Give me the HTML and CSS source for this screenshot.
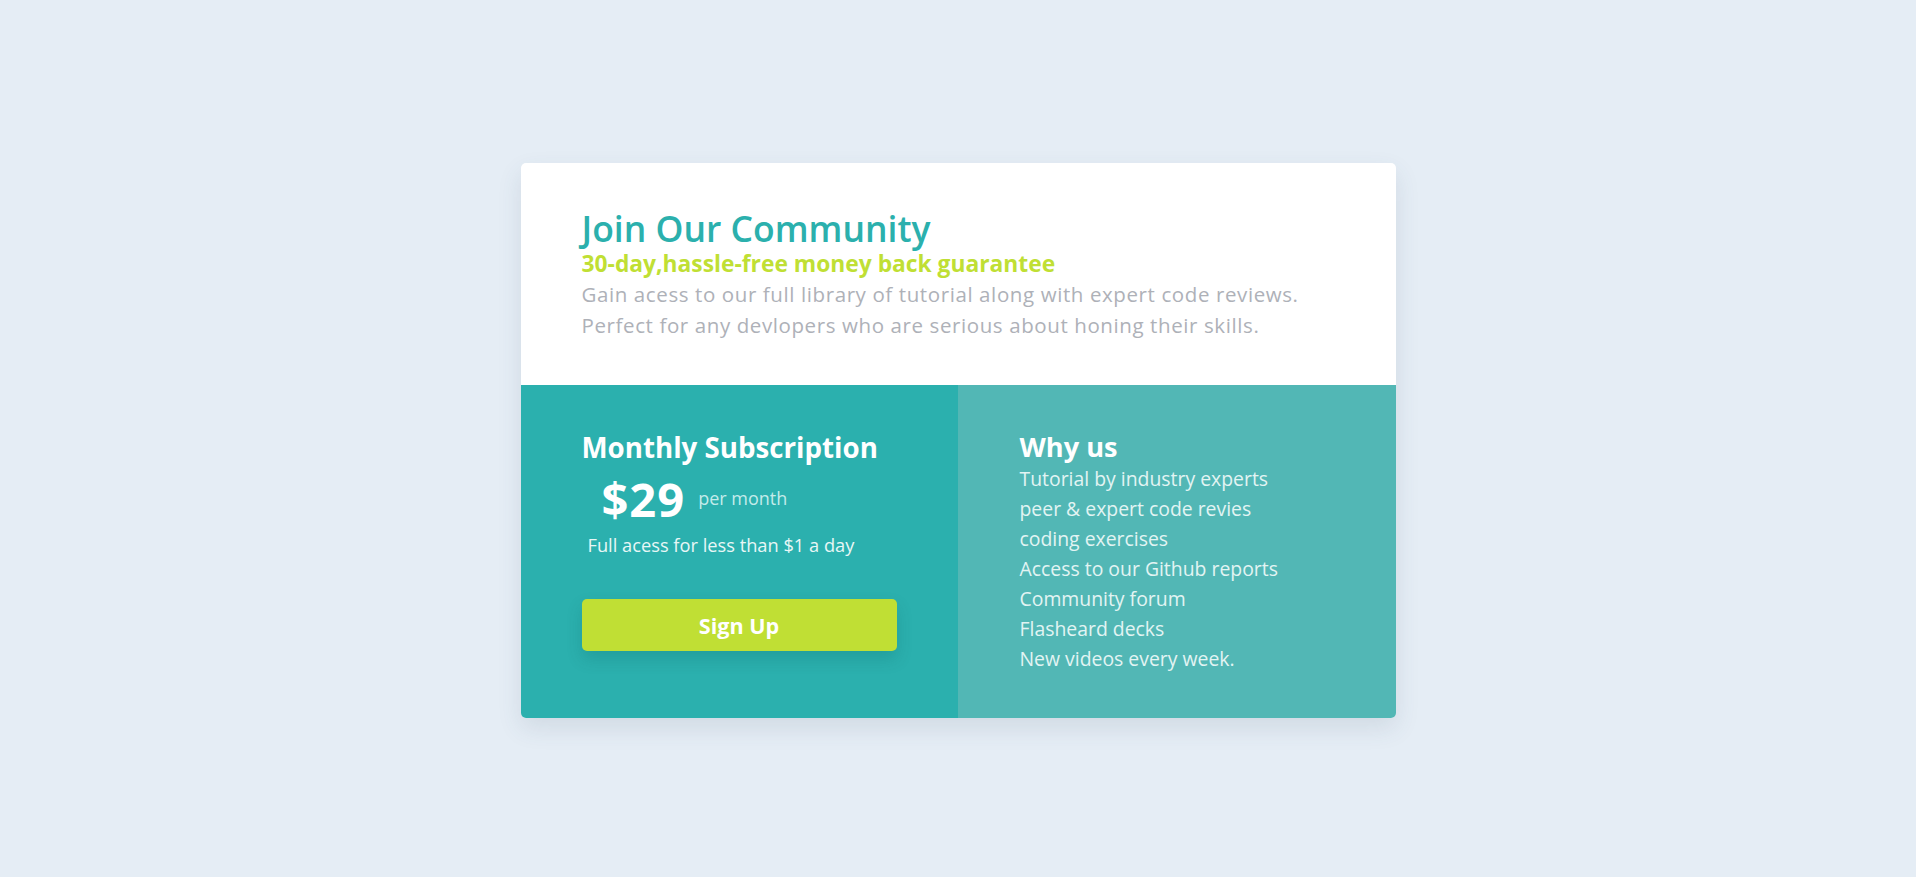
FILE: index.html
```
<!DOCTYPE html>
<html lang="en">
<head>
<meta charset="utf-8">
<title>Join Our Community</title>
<link rel="stylesheet" href="styles.css">
</head>
<body>
<main class="card">
  <section class="intro">
    <h1 class="title">Join Our Community</h1>
    <h2 class="guarantee">30-day,hassle-free money back guarantee</h2>
    <p class="desc">Gain acess to our full library of tutorial along with expert code reviews.<br>Perfect for any devlopers who are serious about honing their skills.</p>
  </section>
  <section class="bottom">
    <div class="sub">
      <h3 class="sub-title">Monthly Subscription</h3>
      <div class="price"><span class="amount">$29</span><span class="per">per month</span></div>
      <p class="full">Full acess for less than $1 a day</p>
      <button class="signup">Sign Up</button>
    </div>
    <div class="why">
      <h3 class="why-title">Why us</h3>
      <ul class="why-list">
        <li>Tutorial by industry experts</li>
        <li>peer &amp; expert code revies</li>
        <li>coding exercises</li>
        <li>Access to our Github reports</li>
        <li>Community forum</li>
        <li>Flasheard decks</li>
        <li>New videos every week.</li>
      </ul>
    </div>
  </section>
</main>
</body>
</html>
```
FILE: styles.css
```
* { box-sizing: border-box; }
html, body { margin: 0; padding: 0; }
body {
  background: #e5edf5;
  font-family: "Open Sans", "Liberation Sans", sans-serif;
  min-height: 100vh;
  padding-top: 4px;
  display: flex;
  align-items: center;
  justify-content: center;
}
.card {
  width: 875px;
  border-radius: 5px;
  overflow: hidden;
  box-shadow: 0 10px 25px rgba(60, 80, 110, 0.12);
  background: #fff;
}
.intro {
  height: 222px;
  padding: 43px 62px 0 61px;
}
.title {
  margin: 0;
  font-size: 35.5px;
  font-weight: 600;
  line-height: 44px;
  color: #2bb0ad;
}
.guarantee {
  margin: -1px 0 0;
  font-size: 22.8px;
  font-weight: 700;
  line-height: 30px;
  color: #c0df34;
}
.desc {
  margin: 0;
  font-size: 20.5px;
  letter-spacing: 0.6px;
  line-height: 31px;
  color: #aeb1b8;
}
.bottom {
  display: grid;
  grid-template-columns: 437px 438px;
  height: 333px;
}
.sub {
  background: #2bb0ae;
  padding: 44px 62px 0 61px;
}
.sub-title, .why-title {
  margin: 0;
  font-size: 27.7px;
  font-weight: 700;
  line-height: 36px;
  color: #fff;
}
.why-title { font-size: 27.2px; }
.price {
  display: flex;
  align-items: flex-start;
  padding-left: 20px;
  margin-top: 9px;
  height: 50px;
}
.amount {
  font-size: 47px;
  line-height: 50px;
  letter-spacing: 1px;
  font-weight: 700;
  color: #fff;
}
.per {
  margin: 12px 0 0 13px;
  font-size: 18px;
  line-height: 24px;
  color: #c3ebea;
}
.full {
  margin: 8px 0 0 6px;
  font-size: 18.25px;
  color: #e8f7f6;
  line-height: 26px;
}
.signup {
  display: block;
  margin-top: 41px;
  width: 315px;
  height: 52px;
  border: none;
  border-radius: 5px;
  background: #c0df34;
  color: #fff;
  font-family: inherit;
  font-size: 21.6px;
  font-weight: 700;
  box-shadow: 0 8px 16px rgba(0, 80, 80, 0.18);
}
.why {
  background: #52b7b5;
  padding: 44px 40px 0 62px;
}
.why-list {
  list-style: none;
  margin: -1px 0 0;
  padding: 0;
}
.why-list li {
  font-size: 19.4px;
  line-height: 30px;
  color: #e2f4f3;
}
```
